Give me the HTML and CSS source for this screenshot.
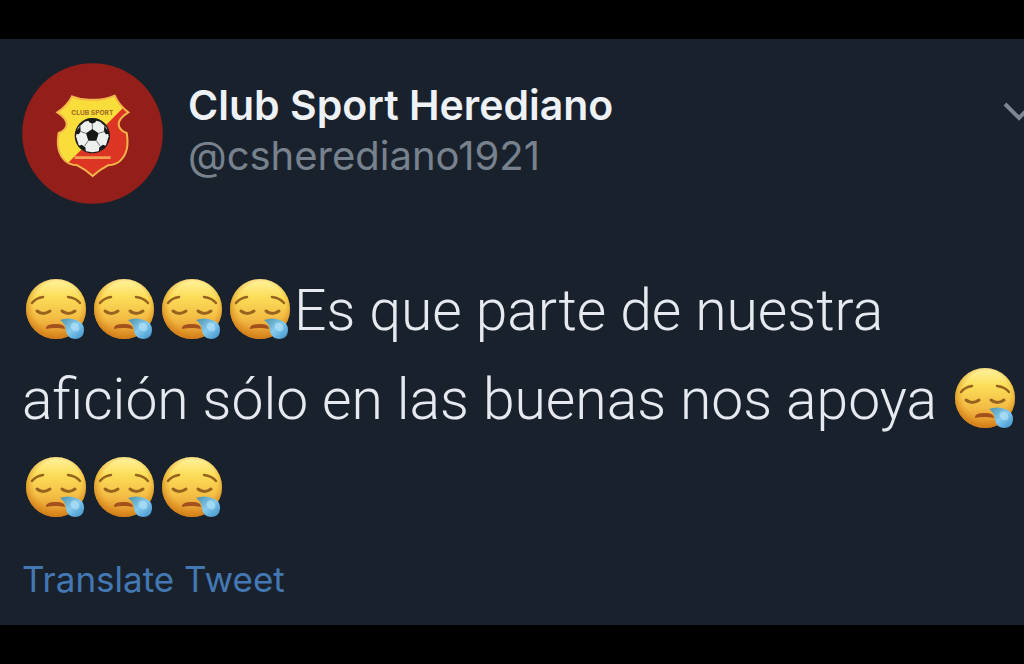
FILE: index.html
```
<!DOCTYPE html>
<html lang="es">
  <head>
    <meta charset="UTF-8">
    <meta name="viewport" content="width=device-width, initial-scale=1">
    <title>Club Sport Herediano</title>
    <link rel="stylesheet" href="styles.css">
  </head>

  <body>
    <!-- shared emoji drawing -->
    <svg class="sprite" aria-hidden="true">
      <defs>
        <linearGradient id="face" x1="0" y1="0" x2="0" y2="1">
          <stop offset="0" stop-color="#fff3a0"/>
          <stop offset="0.3" stop-color="#fbdd58"/>
          <stop offset="0.65" stop-color="#f4bd45"/>
          <stop offset="1" stop-color="#dc8a26"/>
        </linearGradient>
        <radialGradient id="shade" cx="0.52" cy="0.44" r="0.54">
          <stop offset="0.72" stop-color="#e08e1c" stop-opacity="0"/>
          <stop offset="1" stop-color="#d07a14" stop-opacity="0.7"/>
        </radialGradient>
        <linearGradient id="drop" x1="0" y1="0" x2="1" y2="1">
          <stop offset="0" stop-color="#4a8fa8"/>
          <stop offset="0.5" stop-color="#86cbee"/>
          <stop offset="1" stop-color="#3b90cc"/>
        </linearGradient>
      </defs>
      <symbol id="sleepy" viewBox="0 0 68 68">
        <circle cx="34" cy="34" r="30" fill="url(#face)"/>
        <circle cx="34" cy="34" r="30" fill="url(#shade)"/>
        <g fill="none" stroke="#976420" stroke-linecap="round">
          <path d="M10 28Q14 23 21 22" stroke-width="2.5"/>
          <path d="M46 22Q54 23 58 28" stroke-width="2.5"/>
          <path d="M15 36Q21 41 28 36" stroke-width="3"/>
          <path d="M40 36Q46 41 53 36" stroke-width="3"/>
        </g>
        <path d="M24 54Q23 49 34 49Q43 49 43 54Q38 53 34 53Q28 53 24 54Z" fill="#a4501c"/>
        <path d="M38 45Q46 42 54 45Q63 48 62 56Q61 64 53 64Q45 63 44 56Q44 49 38 45Z" fill="url(#drop)"/>
        <ellipse cx="53" cy="52" rx="4" ry="5" transform="rotate(-40 53 52)" fill="#c5ecfc" opacity="0.500"/>
      </symbol>
    </svg>

    <article class="tweet">
      <header class="tweet__header">
        <svg class="avatar" viewBox="38 38 423 423" role="img" aria-label="Club Sport Herediano">
          <defs>
            <clipPath id="shield">
              <path d="M188 138Q218 150 250 148Q284 150 316 136Q330 166 357 186Q328 204 328 222Q330 240 352 248Q362 302 334 330Q320 344 296 345Q270 358 250 377Q230 358 204 345Q180 344 166 330Q138 302 148 248Q170 240 172 222Q172 204 144 186Q174 166 188 138Z"/>
            </clipPath>
          </defs>
          <circle cx="249.500" cy="249.500" r="211" fill="#931e1a"/>
          <g clip-path="url(#shield)">
            <path d="M130 120H370V390H130Z" fill="#f9dd3a"/>
            <path d="M370 144L146 368V400H380Z" fill="#dd3524"/>
          </g>
          <path d="M188 138Q218 150 250 148Q284 150 316 136Q330 166 357 186Q328 204 328 222Q330 240 352 248Q362 302 334 330Q320 344 296 345Q270 358 250 377Q230 358 204 345Q180 344 166 330Q138 302 148 248Q170 240 172 222Q172 204 144 186Q174 166 188 138Z" fill="none" stroke="#f3b64a" stroke-width="6"/>
          <text class="avatar__name" x="249" y="193" text-anchor="middle">CLUB SPORT</text>
          <path d="M196 322H304" stroke="#f0a052" stroke-width="8"/>
          <circle cx="249" cy="256" r="53" fill="#1d1c1c"/>
          <path d="M249 208L272 214L292 232L298 258L290 284L272 302L249 306L226 302L208 284L200 258L206 232L226 214Z" fill="#eef0f0"/>
          <g fill="#161818">
            <path d="M249 236L268 249L261 271H237L230 249Z"/>
            <path d="M234 205H264L258 216L249 220L240 216Z"/>
            <path d="M285 226L302 250L290 252L284 244Z"/>
            <path d="M213 226L196 250L208 252L214 244Z"/>
            <path d="M268 306L290 287L281 283L270 291Z"/>
            <path d="M230 306L208 287L217 283L228 291Z"/>
          </g>
          <path d="M249 236V218M268 249L286 243M261 271L272 287M237 271L226 287M230 249L212 243" stroke="#70777a" stroke-width="3"/>
        </svg>
        <div class="author">
          <div class="author__name">Club Sport Herediano</div>
          <div class="author__handle">@csherediano1921</div>
        </div>
        <button class="more" type="button" aria-label="More">
          <svg class="more__icon" viewBox="0 0 34 24"><path d="M3 4L17 18L31 4"/></svg>
        </button>
      </header>

      <p class="tweet__text"><svg class="emoji" role="img" aria-label="😪"><use href="#sleepy"/></svg><svg class="emoji" role="img" aria-label="😪"><use href="#sleepy"/></svg><svg class="emoji" role="img" aria-label="😪"><use href="#sleepy"/></svg><svg class="emoji" role="img" aria-label="😪"><use href="#sleepy"/></svg>Es que parte de nuestra afición sólo en las buenas nos apoya <svg class="emoji" role="img" aria-label="😪"><use href="#sleepy"/></svg><svg class="emoji" role="img" aria-label="😪"><use href="#sleepy"/></svg><svg class="emoji" role="img" aria-label="😪"><use href="#sleepy"/></svg><svg class="emoji" role="img" aria-label="😪"><use href="#sleepy"/></svg></p>

      <a class="translate" href="#">Translate Tweet</a>
    </article>
  </body>
</html>
```
FILE: styles.css
```
* {
  box-sizing: border-box;
}
body {
  margin: 0;
  padding: 39px 0;
  background: #000;
  font-family: Inter, 'Liberation Sans', sans-serif;
}
.sprite {
  position: absolute;
  width: 0;
  height: 0;
}

.tweet {
  padding: 24px 0 25px 22px;
  background: #19222c;
  overflow: hidden;
}
.tweet__header {
  display: flex;
  align-items: flex-start;
}
.avatar {
  flex: none;
  width: 141px;
  height: 141px;
}
.avatar__name {
  font-size: 20px;
  font-weight: 700;
  fill: #a06a22;
}

.author {
  padding: 16px 0 0 25px;
}
.author__name {
  font-size: 41px;
  font-weight: 600;
  line-height: 52px;
  color: #eef1f6;
}
.author__handle {
  font-size: 40px;
  line-height: 50px;
  color: #78828e;
}

.more {
  margin: 37px -12px 0 auto;
  padding: 0;
  border: 0;
  background: none;
  cursor: pointer;
}
.more__icon {
  display: block;
  width: 34px;
  height: 24px;
  fill: none;
  stroke: #7d8692;
  stroke-width: 4;
}

.tweet__text {
  margin: 62px 0 0;
  font-family: Roboto, Inter, sans-serif;
  font-size: 57px;
  font-weight: 300;
  line-height: 89px;
  color: #e6eaf0;
}
.emoji {
  width: 68px;
  height: 68px;
  vertical-align: -13px;
}

.translate {
  display: block;
  width: max-content;
  margin-top: 25px;
  font-size: 35px;
  line-height: 42px;
  color: #4478b4;
  text-decoration: none;
}
```
